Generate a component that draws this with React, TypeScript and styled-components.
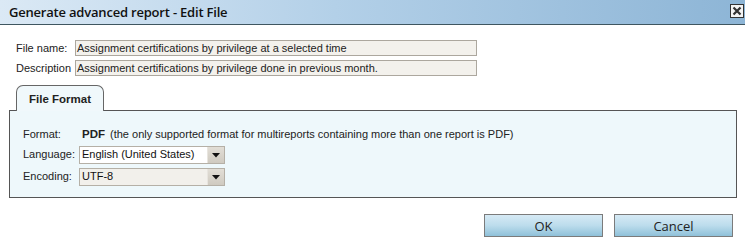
import React from 'react';
import styled, { createGlobalStyle } from 'styled-components';

const GlobalStyle = createGlobalStyle`
  html, body {
    margin: 0;
    padding: 0;
    background: #ffffff;
  }
  body {
    font-family: "Liberation Sans", Arial, sans-serif;
    font-size: 11px;
    color: #222;
  }
`;

const Window = styled.div`
  width: 745px;
  height: 247px;
  display: flex;
  flex-direction: column;
  background: #ffffff;
  overflow: hidden;
`;

const TitleBar = styled.div`
  height: 24px;
  display: flex;
  align-items: center;
  justify-content: space-between;
  padding: 0 1px 0 9px;
  background: linear-gradient(to right, #dbe9f5 0%, #b3d0e8 45%, #8db5d6 100%);
  border-bottom: 1px solid #3f5660;
`;

const Title = styled.span`
  font-family: "Open Sans", "DejaVu Sans", sans-serif;
  font-weight: 600;
  font-size: 13px;
  color: #111;
  letter-spacing: -0.2px;
`;

const CloseButton = styled.button`
  width: 14px;
  height: 14px;
  padding: 0;
  margin-top: -2px;
  display: flex;
  align-items: center;
  justify-content: center;
  background: #f4f4f4;
  border: 1px solid #333;
  cursor: pointer;
`;

const Body = styled.div`
  flex: 1;
  display: flex;
  flex-direction: column;
  padding: 15px 8px 0 9px;
`;

const FieldRow = styled.div`
  display: flex;
  align-items: center;
  padding-left: 7px;
  margin-bottom: 4px;
`;

const FieldLabel = styled.span<{ $width: number }>`
  width: ${p => p.$width}px;
  flex-shrink: 0;
  color: #222;
`;

const TextInput = styled.div`
  width: 398px;
  height: 14px;
  line-height: 14px;
  padding: 0 1px;
  background: #f3f1ec;
  border: 1px solid #aca79e;
  color: #222;
  white-space: nowrap;
  overflow: hidden;
`;

const TabStrip = styled.div`
  display: flex;
  padding-left: 7px;
  margin-top: 5px;
  margin-bottom: -1px;
  position: relative;
  z-index: 1;
`;

const Tab = styled.div`
  width: 86px;
  height: 25px;
  display: flex;
  align-items: center;
  justify-content: center;
  background: #f0f8fb;
  border: 1px solid #666;
  border-bottom: none;
  border-radius: 7px 7px 0 0;
  font-weight: bold;
  font-size: 11.5px;
  color: #222;
`;

const Panel = styled.div`
  width: 728px;
  height: 88px;
  box-sizing: border-box;
  display: flex;
  flex-direction: column;
  gap: 4px;
  padding: 15px 0 0 13px;
  background: #eef8fb;
  border: 1px solid #555;
`;

const PanelRow = styled.div<{ $height: number }>`
  display: flex;
  align-items: flex-start;
  height: ${p => p.$height}px;
`;

const PanelLabel = styled.span`
  width: 56px;
  flex-shrink: 0;
  line-height: 16px;
`;

const FormatValue = styled.span`
  padding-left: 3px;
  line-height: 16px;
  b {
    font-size: 11.5px;
    margin-right: 5px;
  }
`;

const Select = styled.div<{ $muted?: boolean }>`
  width: 144px;
  height: 16px;
  display: flex;
  background: ${p => (p.$muted ? '#f2f0eb' : '#ffffff')};
  border: 1px solid #b5b0a6;
`;

const SelectText = styled.span`
  flex: 1;
  padding: 0 2px;
  line-height: 14px;
  color: #111;
  white-space: nowrap;
  overflow: hidden;
`;

const SelectArrow = styled.span`
  width: 16px;
  display: flex;
  align-items: center;
  justify-content: center;
  background: linear-gradient(#e2ded6, #cfcac0);
  border-left: 1px solid #e8e5df;
`;

const Footer = styled.div`
  display: flex;
  justify-content: flex-end;
  gap: 11px;
  padding-right: 4px;
  margin-top: 16px;
`;

const Button = styled.button`
  width: 119px;
  height: 23px;
  padding: 0;
  background: linear-gradient(#d6eaf5 0%, #bcdcec 50%, #8fc1d9 100%);
  border: 1px solid #7b7b7b;
  font-family: "Open Sans", "DejaVu Sans", sans-serif;
  font-size: 13px;
  color: #222;
  cursor: pointer;
`;

const Caret = () => (
  <svg width="8" height="5" viewBox="0 0 8 5">
    <path d="M0 0 H8 L4 4.5 Z" fill="#111" />
  </svg>
);

const CloseIcon = () => (
  <svg width="10" height="10" viewBox="0 0 10 10">
    <path d="M1.5 1.5 L8.5 8.5 M8.5 1.5 L1.5 8.5" stroke="#333" strokeWidth="2.2" />
  </svg>
);

export default function App() {
  return (
    <>
      <GlobalStyle />
      <Window>
        <TitleBar>
          <Title>Generate advanced report - Edit File</Title>
          <CloseButton aria-label="Close">
            <CloseIcon />
          </CloseButton>
        </TitleBar>
        <Body>
          <FieldRow>
            <FieldLabel $width={59}>File name:</FieldLabel>
            <TextInput>Assignment certifications by privilege at a selected time</TextInput>
          </FieldRow>
          <FieldRow>
            <FieldLabel $width={59}>Description</FieldLabel>
            <TextInput>Assignment certifications by privilege done in previous month.</TextInput>
          </FieldRow>

          <TabStrip>
            <Tab>File Format</Tab>
          </TabStrip>
          <Panel>
            <PanelRow $height={16}>
              <PanelLabel>Format:</PanelLabel>
              <FormatValue>
                <b>PDF</b>(the only supported format for multireports containing more than one report is PDF)
              </FormatValue>
            </PanelRow>
            <PanelRow $height={18}>
              <PanelLabel>Language:</PanelLabel>
              <Select>
                <SelectText>English (United States)</SelectText>
                <SelectArrow>
                  <Caret />
                </SelectArrow>
              </Select>
            </PanelRow>
            <PanelRow $height={18}>
              <PanelLabel>Encoding:</PanelLabel>
              <Select $muted>
                <SelectText>UTF-8</SelectText>
                <SelectArrow>
                  <Caret />
                </SelectArrow>
              </Select>
            </PanelRow>
          </Panel>

          <Footer>
            <Button>OK</Button>
            <Button>Cancel</Button>
          </Footer>
        </Body>
      </Window>
    </>
  );
}
